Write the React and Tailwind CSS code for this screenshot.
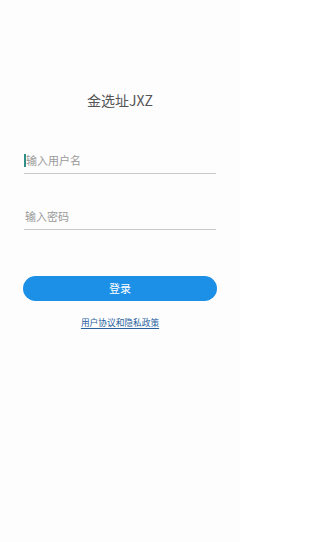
// App.jsx
// Login screen: title, two underlined inputs, pill button and policy link

const FONT = { fontFamily: '"Noto Sans CJK SC", "Noto Sans", sans-serif' };

export default function App() {
  return (
    <div className="w-[240px] h-[542px] bg-[#fdfdfd] flex flex-col" style={FONT}>
      {/* Title */}
      <div className="mt-[90px] h-[20px] flex items-center justify-center text-[14px] leading-none text-[#555]">
        金选址JXZ
      </div>

      {/* Username */}
      <div className="mt-[24px] mx-[24px] h-[40px] flex items-end border-b border-[#c8c8c8]">
        <div className="relative flex items-center h-[26px] pl-[2px] text-[11px] text-[#9a9a9a]">
          <span className="absolute left-0 top-[7px] w-[1.5px] h-[13px] bg-[#2f8f87]" />
          输入用户名
        </div>
      </div>

      {/* Password */}
      <div className="mt-[16px] mx-[24px] h-[40px] flex items-end border-b border-[#c8c8c8]">
        <div className="flex items-center h-[26px] pl-[1px] text-[11px] text-[#9a9a9a]">
          输入密码
        </div>
      </div>

      {/* Login button */}
      <button className="mt-[46px] mx-[23px] h-[25px] rounded-full bg-[#1c8fe6] text-white text-[11px] leading-none flex items-center justify-center">
        登录
      </button>

      {/* Policy link */}
      <div className="mt-[18px] flex justify-center">
        <span className="text-[8.7px] leading-none text-[#2a5f9e] underline underline-offset-[2px]">
          用户协议和隐私政策
        </span>
      </div>
    </div>
  );
}
